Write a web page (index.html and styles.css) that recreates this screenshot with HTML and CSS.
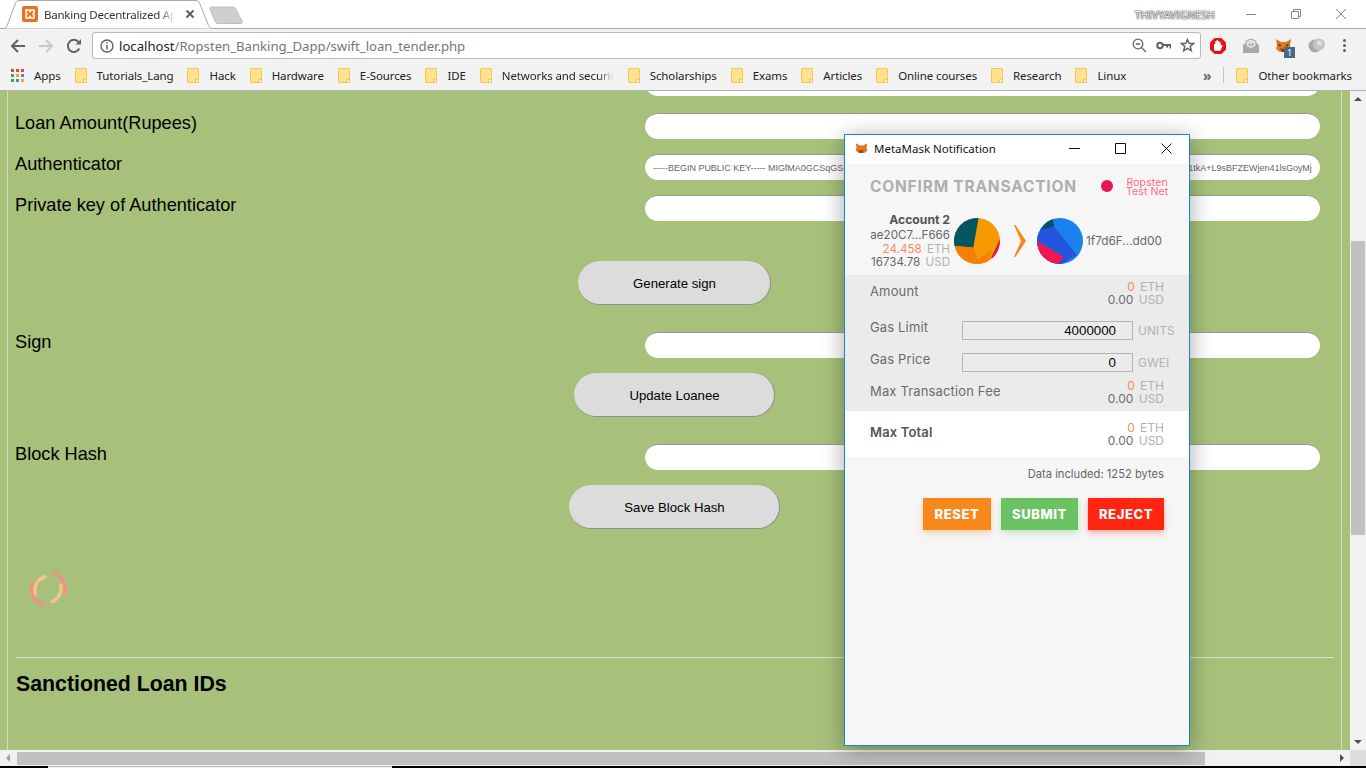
FILE: index.html
```html
<!DOCTYPE html>
<html lang="en">
<head>
    <meta charset="UTF-8">
    <meta name="viewport" content="width=device-width, initial-scale=1.0">
    <title>Banking Decentralized App</title>
    <link rel="stylesheet" href="styles.css">
</head>
<body>
    <div class="tabbar">
        <div class="tab">
            <svg class="tab-shape" width="214" height="29" viewBox="0 0 214 29"><path d="M0 28.500h4c1.500 0 2.500-1 3.200-3L15.500 3c.8-1.800 2-2.500 3.500-2.500h177c1.500 0 2.700.7 3.500 2.500l9 22.500c1 2 2 3 5 3" fill="#fff" stroke="#a9a9a9"/></svg>
            <svg class="favicon" width="16" height="16" viewBox="0 0 16 16"><rect width="16" height="16" rx="2" fill="#e8701f"/><path d="M4 4h3l1 1.500 1-1.500h3v3l-1 1 1 1v3H9l-1-1.500L7 12H4V9l1-1-1-1z" fill="none" stroke="#fff" stroke-width="1.600"/></svg>
            <span class="tab-title">Banking Decentralized Ap</span>
            <svg class="tab-close" width="10" height="10" viewBox="0 0 10 10"><path d="M1.500 1.500l7 7M8.500 1.500l-7 7" stroke="#5a5a5a" stroke-width="1.800"/></svg>
        </div>
        <svg class="newtab" width="36" height="19" viewBox="0 0 36 19"><path d="M2 1h22c1 0 2 .5 2.500 1.500L33 15c.5 1.500 0 2.500-1.500 2.500H9c-1 0-2-.5-2.500-1.500L1 3C.5 2 1 1 2 1z" fill="#cfcfcf" stroke="#bcbcbc"/></svg>
        <div class="winuser">THIVYAVIGNESH</div>
        <div class="winctl">
            <svg width="12" height="12" viewBox="0 0 12 12"><path d="M1 6.500h10" stroke="#8a8a8a"/></svg>
            <svg width="12" height="12" viewBox="0 0 12 12"><path d="M1.500 3.500h7v7h-7zM3.500 3.500v-2h7v7h-2" fill="none" stroke="#8a8a8a"/></svg>
            <svg width="12" height="12" viewBox="0 0 12 12"><path d="M1 1l10 10M11 1L1 11" stroke="#8a8a8a"/></svg>
        </div>
    </div>

    <div class="toolbar">
        <svg class="navbtn" width="16" height="16" viewBox="0 0 16 16"><path d="M15 8H2M8 2L2 8l6 6" fill="none" stroke="#5f6368" stroke-width="2"/></svg>
        <svg class="navbtn" width="16" height="16" viewBox="0 0 16 16"><path d="M1 8h13M8 2l6 6-6 6" fill="none" stroke="#c8c8c8" stroke-width="2"/></svg>
        <svg class="navbtn" width="16" height="16" viewBox="0 0 16 16"><path d="M13.300 10.500A6 6 0 1 1 12.500 4" fill="none" stroke="#5f6368" stroke-width="2"/><path d="M9.500 6.500H15V1z" fill="#5f6368"/></svg>
        <div class="omnibox">
            <svg width="14" height="14" viewBox="0 0 14 14"><circle cx="7" cy="7" r="6" fill="none" stroke="#5f6368" stroke-width="1.400"/><path d="M7 6v4.500" stroke="#5f6368" stroke-width="1.500"/><path d="M7 3.200v1.600" stroke="#5f6368" stroke-width="1.500"/></svg>
            <span class="url"><b>localhost</b>/Ropsten_Banking_Dapp/swift_loan_tender.php</span>
            <svg width="15" height="15" viewBox="0 0 15 15"><circle cx="6" cy="6" r="4.800" fill="none" stroke="#5f6368" stroke-width="1.300"/><path d="M3.800 6h4.400M9.500 9.500l4.500 4.500" stroke="#5f6368" stroke-width="1.300"/></svg>
            <svg width="15" height="15" viewBox="0 0 15 15"><circle cx="4" cy="7.500" r="2.800" fill="none" stroke="#5f6368" stroke-width="2"/><path d="M6.500 7h8v3.500M11 7v2.500" fill="none" stroke="#5f6368" stroke-width="2"/></svg>
            <svg width="15" height="15" viewBox="0 0 15 15"><path d="M7.500 1.500l1.800 4h4.300l-3.400 2.900 1.200 4.400-3.900-2.400-3.900 2.400 1.200-4.400L1.400 5.500h4.300z" fill="none" stroke="#5f6368" stroke-width="1.400"/></svg>
        </div>
        <div class="extensions">
            <svg width="18" height="18" viewBox="0 0 18 18"><path d="M5.500 1h7L17 5.500v7L12.500 17h-7L1 12.500v-7z" fill="#e3151b"/><path d="M5 13.500V7h1.300V4.300h1.400V3h1.300v1.300h1.500V5.500h1.200v3.300l1.100-1 .8.700-2.400 5.500z" fill="#fff"/></svg>
            <svg width="16" height="16" viewBox="0 0 16 16"><path d="M0 7l3-2h10l3 2v8H0z" fill="#a8a8a8"/><path d="M3 8V3l5-2 5 2v5l-5 3z" fill="#e2e2e2" stroke="#a8a8a8"/><path d="M5.500 6.500l1 1 1-2M8 6.500l1 1 1.500-2.500" fill="none" stroke="#8a8a8a"/></svg>
            <div class="fox-ext">
                <svg width="17" height="16" viewBox="0 0 17 16"><path d="M1 1l5 3h5l5-3-1 6 1 4-4 3h-7l-4-3 1-4z" fill="#e2761b"/><path d="M5 10l3 1 3-1-2 4H7z" fill="#763d16"/><path d="M3 6l3 1-1 2zM14 6l-3 1 1 2z" fill="#3b2a1b"/></svg>
                <span class="badge">1</span>
            </div>
            <svg width="18" height="16" viewBox="0 0 18 16"><circle cx="7" cy="8" r="6.500" fill="#a9a9a9"/><circle cx="11" cy="6.500" r="6" fill="#c4c4c4"/><circle cx="11.500" cy="5" r="2.500" fill="#e0e0e0"/></svg>
            <div class="kebab"><i></i><i></i><i></i></div>
        </div>
    </div>

    <div class="bookmarks">
        <div class="bm bm-apps">
            <span class="apps-grid">
                <i class="r"></i><i class="r"></i><i class="r"></i>
                <i class="g"></i><i class="y"></i><i class="b"></i>
                <i class="g"></i><i class="b"></i><i class="y"></i>
            </span>
            Apps
        </div>
        <div class="bm"><i class="folder"></i>Tutorials_Lang</div>
        <div class="bm"><i class="folder"></i>Hack</div>
        <div class="bm"><i class="folder"></i>Hardware</div>
        <div class="bm"><i class="folder"></i>E-Sources</div>
        <div class="bm"><i class="folder"></i>IDE</div>
        <div class="bm"><i class="folder"></i><span class="bm-cut">Networks and securit</span></div>
        <div class="bm"><i class="folder"></i>Scholarships</div>
        <div class="bm"><i class="folder"></i>Exams</div>
        <div class="bm"><i class="folder"></i>Articles</div>
        <div class="bm"><i class="folder"></i>Online courses</div>
        <div class="bm"><i class="folder"></i>Research</div>
        <div class="bm"><i class="folder"></i>Linux</div>
        <div class="bm-right">
            <span class="chev">»</span>
            <span class="bm-sep"></span>
            <div class="bm"><i class="folder"></i>Other bookmarks</div>
        </div>
    </div>

    <div class="viewport">
        <div class="page">
            <div class="row row-first"><label></label><input type="text"></div>
            <div class="row"><label>Loan Amount(Rupees)</label><input type="text"></div>
            <div class="row"><label>Authenticator</label><input type="text" class="small" value="-----BEGIN PUBLIC KEY----- MIGfMA0GCSqGSIb3DQEBAQUAA4GNADCBiQKBgQC7vbqajDw4o6gJy8X2kpT9xLmQe3RhZ0nVw5Fy1tkA+L9sBFZEWjen41lsGoyMj" size="20"></div>
            <div class="row"><label>Private key of Authenticator</label><input type="text"></div>
            <div class="btn-row btn-row-1"><button class="w192">Generate sign</button></div>
            <div class="row row-after-btn"><label>Sign</label><input type="text"></div>
            <div class="btn-row"><button class="w200">Update Loanee</button></div>
            <div class="row row-after-btn"><label>Block Hash</label><input type="text"></div>
            <div class="btn-row"><button class="w210">Save Block Hash</button></div>
            <svg class="spinner" width="44" height="42" viewBox="0 0 44 42">
                <path d="M17.300 37A17 17 0 0 1 6.300 15.300" fill="none" stroke="#fb8a8a" stroke-width="3" stroke-linecap="round"/>
                <path d="M27.300 5.300A17 17 0 0 1 39 25.300" fill="none" stroke="#fb8a8a" stroke-width="3" stroke-linecap="round"/>
                <path d="M9.500 26A14 14 0 0 1 19 8.700" fill="none" stroke="#f6c08f" stroke-width="3.500" stroke-linecap="round"/>
                <path d="M34.700 17A14 14 0 0 1 25.700 33.700" fill="none" stroke="#f6c08f" stroke-width="3.500" stroke-linecap="round"/>
            </svg>
            <hr>
            <h2>Sanctioned Loan IDs</h2>
        </div>
    </div>

    <div class="vscroll">
        <span class="arr-up"></span>
        <div class="vtrack"><div class="vthumb"></div></div>
        <span class="arr-down"></span>
    </div>
    <div class="hscroll">
        <span class="arr-left"></span>
        <div class="htrack"><div class="hthumb"></div></div>
        <span class="arr-right"></span>
        <span class="corner"></span>
    </div>
    <div class="taskbar"><div class="task-item"></div></div>

    <div class="popup">
        <div class="popup-title">
            <svg width="13" height="13" viewBox="0 0 17 16"><path d="M1 1l5 3h5l5-3-1 6 1 4-4 3h-7l-4-3 1-4z" fill="#e2761b"/><path d="M5 10l3 1 3-1-2 4H7z" fill="#763d16"/></svg>
            <span class="popup-name">MetaMask Notification</span>
            <svg class="p-min" width="11" height="11" viewBox="0 0 11 11"><path d="M0 5.500h11" stroke="#111"/></svg>
            <svg class="p-max" width="11" height="11" viewBox="0 0 11 11"><path d="M.5.500h10v10H.5z" fill="none" stroke="#111"/></svg>
            <svg class="p-close" width="11" height="11" viewBox="0 0 11 11"><path d="M.5.500l10 10M10.500.500l-10 10" stroke="#111"/></svg>
        </div>
        <div class="popup-head">
            <h3>CONFIRM TRANSACTION</h3>
            <span class="net-dot"></span>
            <span class="net-name">Ropsten<br>Test Net</span>
        </div>
        <div class="parties">
            <div class="from">
                <div class="acc-name">Account 2</div>
                <div>ae20C7...F666</div>
                <div><span class="orange">24.458</span> <span class="unit">ETH</span></div>
                <div>16734.78 <span class="unit">USD</span></div>
            </div>
            <svg width="46" height="46" viewBox="0 0 46 46">
                <clipPath id="pieclip"><circle cx="23" cy="23" r="23"/></clipPath>
                <g clip-path="url(#pieclip)">
                    <rect width="46" height="46" fill="#f59a00"/>
                    <path d="M24.500 0L19.300 29.500 0 28V0z" fill="#02565f"/>
                    <path d="M0 28l19.300 1.500L24 41.500 38 32 34 46H0z" fill="#f67f00"/>
                    <path d="M46 21L37 40l9 3z" fill="#d81b50"/>
                </g>
            </svg>
            <svg class="chevron" width="12" height="32" viewBox="0 0 12 32"><path d="M0 0h1.500L12 16 1.500 32H0l7-16z" fill="#f7861c"/></svg>
            <svg width="46" height="46" viewBox="0 0 46 46">
                <clipPath id="pieclip2"><circle cx="23" cy="23" r="23"/></clipPath>
                <g clip-path="url(#pieclip2)">
                    <rect width="46" height="46" fill="#1a82ee"/>
                    <path d="M0 18L4 11 17 8.500 40 37 25 46H0z" fill="#2356dc"/>
                    <path d="M0 23L27 39 21 46H0z" fill="#f2184f"/>
                    <path d="M3 12L13 0h3l1 8.500z" fill="#05506a"/>
                </g>
            </svg>
            <div class="to">1f7d6F...dd00</div>
        </div>
        <div class="details">
            <div class="d-row d-amount">
                <span>Amount</span>
                <div class="vals"><div><span class="orange">0</span> <span class="unit">ETH</span></div><div>0.00 <span class="unit">USD</span></div></div>
            </div>
            <div class="d-row d-gas">
                <span>Gas Limit</span>
                <div class="gas-right"><input type="text" value="4000000"><span class="unit">UNITS</span></div>
            </div>
            <div class="d-row d-gas">
                <span>Gas Price</span>
                <div class="gas-right"><input type="text" value="0"><span class="unit">GWEI</span></div>
            </div>
            <div class="d-row d-fee">
                <span>Max Transaction Fee</span>
                <div class="vals"><div><span class="orange">0</span> <span class="unit">ETH</span></div><div>0.00 <span class="unit">USD</span></div></div>
            </div>
        </div>
        <div class="d-row total">
            <span>Max Total</span>
            <div class="vals"><div><span class="orange">0</span> <span class="unit">ETH</span></div><div>0.00 <span class="unit">USD</span></div></div>
        </div>
        <div class="data-inc">Data included: 1252 bytes</div>
        <div class="actions">
            <button class="reset">RESET</button>
            <button class="submit">SUBMIT</button>
            <button class="reject">REJECT</button>
        </div>
    </div>
</body>
</html>
```

FILE: styles.css
```css
html, body {
    margin: 0;
    height: 768px;
    overflow: hidden;
}
body {
    position: relative;
    width: 1366px;
    display: flex;
    flex-direction: column;
    background-color: #fff;
    font-family: 'Noto Sans', sans-serif;
    color: #333;
}

/* browser top */
.tabbar {
    height: 28px;
    flex: none;
    display: flex;
    align-items: flex-start;
    background-color: #fff;
    border-bottom: 1px solid #a9a9a9;
    box-sizing: content-box;
}
.tab {
    position: relative;
    width: 203px;
    height: 28px;
    flex: none;
    display: flex;
    align-items: center;
    padding-left: 22px;
    box-sizing: border-box;
    z-index: 1;
}
.tab-shape {
    position: absolute;
    left: 0;
    top: 0;
}
.favicon, .tab-title, .tab-close {
    position: relative;
    flex: none;
}
.tab-title {
    width: 131px;
    margin-left: 6px;
    font-size: 11.500px;
    letter-spacing: -0.25px;
    color: #333;
    white-space: nowrap;
    -webkit-mask-image: linear-gradient(to right, #000 88%, transparent);
    mask-image: linear-gradient(to right, #000 88%, transparent);
}
.tab-close {
    margin-left: 10px;
}
.newtab {
    margin: 6px 0 0 6px;
    flex: none;
}
.winuser {
    margin: 8px 0 0 890px;
    width: 82px;
    font-size: 10px;
    letter-spacing: 0.3px;
    color: #eee;
    text-shadow: 0 0 2px #222, 0 0 1px #222;
    white-space: nowrap;
}
.winctl {
    display: flex;
    gap: 33px;
    margin: 8px 0 0 28px;
}

.toolbar {
    height: 33px;
    flex: none;
    display: flex;
    align-items: center;
    background-color: #f2f2f2;
    padding-left: 10px;
    box-sizing: border-box;
}
.navbtn {
    margin-right: 12px;
}
.omnibox {
    width: 1109px;
    height: 27px;
    margin-left: -2px;
    display: flex;
    align-items: center;
    gap: 9px;
    padding: 0 5px 0 7px;
    box-sizing: border-box;
    background-color: #fff;
    border: 1px solid #b8b8b8;
    border-radius: 3px;
}
.url {
    flex: 1;
    margin-left: -4px;
    padding-top: 1px;
    font-size: 13.150px;
    color: #70787d;
}
.url b {
    font-weight: normal;
    color: #222;
}
.extensions {
    display: flex;
    align-items: center;
    gap: 16px;
    margin-left: 8px;
}
.fox-ext {
    position: relative;
    display: flex;
}
.badge {
    position: absolute;
    left: 9px;
    top: 9px;
    width: 11px;
    height: 11px;
    background-color: #46698a;
    color: #fff;
    font-size: 9px;
    line-height: 11px;
    text-align: center;
}
.kebab {
    display: flex;
    flex-direction: column;
    gap: 2px;
    margin-left: 1px;
}
.kebab i {
    width: 3px;
    height: 3px;
    background-color: #5f6368;
    border-radius: 50%;
}

.bookmarks {
    height: 29px;
    flex: none;
    display: flex;
    align-items: center;
    gap: 14px;
    padding: 0 0 2px 11px;
    box-sizing: border-box;
    background-color: #f2f2f2;
    border-bottom: 1px solid #b0b0b0;
    font-size: 11.500px;
    letter-spacing: -0.11px;
    color: #222;
}
.bm {
    display: flex;
    align-items: center;
    white-space: nowrap;
}
.apps-grid {
    display: grid;
    grid-template-columns: repeat(3, 3px);
    gap: 2px;
    margin-right: 10px;
}
.apps-grid i {
    width: 3px;
    height: 3px;
}
.apps-grid .r { background-color: #e8453c; }
.apps-grid .g { background-color: #34a853; }
.apps-grid .y { background-color: #f9ab00; }
.apps-grid .b { background-color: #4285f4; }
.folder {
    position: relative;
    width: 10px;
    height: 13px;
    margin-right: 10px;
    background-color: #fde28f;
    border: 1px solid #f2c94c;
    border-radius: 1px;
}
.folder::after {
    content: "";
    position: absolute;
    right: -1px;
    bottom: -1px;
    width: 2px;
    height: 2px;
    background-color: #f2f2f2;
    border: 1px solid #f2c94c;
}
.bm-cut {
    width: 112px;
    overflow: hidden;
    -webkit-mask-image: linear-gradient(to right, #000 85%, transparent);
    mask-image: linear-gradient(to right, #000 85%, transparent);
}
.bm-right {
    margin-left: auto;
    display: flex;
    align-items: center;
    gap: 12px;
    padding-right: 14px;
}
.chev {
    font-size: 14px;
    font-weight: bold;
    color: #666;
}
.bm-sep {
    width: 1px;
    height: 16px;
    background-color: #c4c4c4;
}

/* page */
.viewport {
    height: 659px;
    flex: none;
    margin-right: 16px;
    background-color: #a7c17b;
    overflow: hidden;
}
.page {
    height: 700px;
    margin: 0 8px 0 7px;
    padding: 0 7px 0 8px;
    border-left: 1px solid #d3dcc4;
    border-right: 1px solid #d3dcc4;
    font-family: 'Liberation Sans', sans-serif;
    color: #000;
}
.row {
    height: 41px;
    display: flex;
    align-items: flex-start;
    justify-content: space-between;
}
.row-first {
    margin-top: -21px;
    height: 43px;
}
.row label {
    margin-left: -1px;
    font-size: 18.200px;
    line-height: 21px;
}
.row input {
    width: 675px;
    height: 26px;
    margin-right: 14px;
    padding: 0 8px;
    box-sizing: border-box;
    background-color: #fff;
    border: none;
    border-top: 1px solid #999;
    border-radius: 13px;
    outline: none;
}
.row input.small {
    font-family: 'Liberation Sans', sans-serif;
    font-size: 9px;
    letter-spacing: -0.01px;
    color: #666;
}
.btn-row {
    display: flex;
    justify-content: center;
    height: 71px;
    padding-right: 2px;
    box-sizing: border-box;
}
.btn-row-1 {
    margin-top: 25px;
}
button {
    font-family: 'Liberation Sans', sans-serif;
}
.btn-row button {
    height: 44px;
    padding: 1px 0 0 2px;
    background-color: #dcdcdc;
    border: none;
    border-right: 1px solid #8c8c8c;
    border-bottom: 1px solid #8c8c8c;
    border-radius: 22px;
    font-size: 13.200px;
    color: #000;
}
.w192 { width: 193px; }
.w200 { width: 201px; }
.w210 { width: 211px; }
.spinner {
    display: block;
    margin: 12px 0 0 10px;
}
.page hr {
    margin: 47px 0 0;
    border: none;
    border-top: 1px solid #dfe6d3;
}
.page h2 {
    margin: 14px 0 0;
    font-size: 21.300px;
    line-height: 24px;
}

/* scrollbars */
.vscroll {
    position: absolute;
    right: 0;
    top: 91px;
    width: 16px;
    height: 659px;
    display: flex;
    flex-direction: column;
    align-items: center;
    background-color: #f1f1f1;
}
.vtrack {
    flex: 1;
    width: 100%;
}
.vthumb {
    width: 14px;
    height: 294px;
    margin: 134px auto 0;
    background-color: #c1c1c1;
}
.arr-up, .arr-down {
    width: 0;
    height: 0;
    margin: 6px 0;
    border-left: 4px solid transparent;
    border-right: 4px solid transparent;
}
.arr-up { border-bottom: 4px solid #505050; }
.arr-down { border-top: 4px solid #505050; }
.hscroll {
    position: absolute;
    left: 0;
    top: 750px;
    width: 1366px;
    height: 16px;
    display: flex;
    align-items: center;
    background-color: #f1f1f1;
}
.htrack {
    flex: 1;
}
.hthumb {
    width: 1188px;
    height: 13px;
    margin-left: 1px;
    background-color: #c1c1c1;
}
.arr-left, .arr-right {
    width: 0;
    height: 0;
    margin: 0 6px;
    border-top: 4px solid transparent;
    border-bottom: 4px solid transparent;
}
.arr-left { border-right: 4px solid #a0a0a0; }
.arr-right { border-left: 4px solid #505050; }
.corner {
    width: 16px;
    height: 16px;
    background-color: #dcdcdc;
}
.taskbar {
    position: absolute;
    left: 0;
    bottom: 0;
    width: 100%;
    height: 2px;
    background-color: #000;
}
.task-item {
    width: 344px;
    height: 1px;
    margin-left: 48px;
    background-color: #eee;
    border-top: 1px solid #bbb;
}

/* metamask popup */
.popup {
    position: absolute;
    left: 844px;
    top: 134px;
    width: 346px;
    height: 612px;
    box-sizing: border-box;
    background-color: #f6f6f6;
    border: 1px solid #1a84d8;
    box-shadow: 0 4px 22px rgba(0, 0, 0, 0.35);
    font-family: 'Inter', sans-serif;
    font-size: 13px;
    letter-spacing: 0.15px;
    color: #6b6b6b;
}
.popup-title {
    height: 29px;
    display: flex;
    align-items: center;
    padding: 0 0 3px 10px;
    box-sizing: border-box;
    background-color: #fff;
}
.popup-name {
    width: 194px;
    margin-left: 6px;
    font-family: 'Noto Sans', sans-serif;
    font-size: 11.500px;
    letter-spacing: 0;
    color: #111;
}
.p-min { margin-left: 1px; }
.p-max { margin-left: 35px; }
.p-close { margin-left: 35px; }
.popup-head {
    height: 44px;
    display: flex;
    align-items: center;
    padding-left: 25px;
}
.popup-head h3 {
    width: 231px;
    margin: 0;
    font-size: 15.500px;
    font-weight: 700;
    letter-spacing: 0.8px;
    color: #aeaeae;
    white-space: nowrap;
}
.net-dot {
    width: 12px;
    height: 12px;
    border-radius: 50%;
    background-color: #e91550;
}
.net-name {
    margin: 4px 0 0 13px;
    font-size: 10.500px;
    letter-spacing: 0.1px;
    line-height: 8.700px;
    text-align: center;
    color: #ff6b7e;
}
.parties {
    height: 66px;
    margin-bottom: 1px;
    display: flex;
    align-items: center;
}
.from {
    width: 105px;
    margin-right: 4px;
    text-align: right;
    font-size: 11.600px;
    letter-spacing: 0;
    line-height: 13.500px;
    color: #666;
}
.acc-name {
    margin-bottom: 3px;
    font-size: 12.200px;
    font-weight: 700;
    color: #555;
}
.chevron {
    margin: 0 11px 0 14px;
}
.to {
    margin-left: 3px;
    font-size: 11.800px;
    letter-spacing: 0;
    color: #666;
}
.orange { color: #fa8c5a; }
.unit {
    margin-left: 2px;
    color: #b2b2b2;
}
.details {
    height: 136px;
    background-color: #ebebeb;
}
.d-row {
    display: flex;
    justify-content: space-between;
    align-items: flex-start;
    padding: 0 25px;
}
.d-row > span {
    line-height: 16px;
}
.d-row .vals {
    text-align: right;
    font-size: 12px;
    letter-spacing: 0;
    line-height: 13px;
}
.d-amount {
    height: 44px;
    padding-top: 8px;
    box-sizing: border-box;
}
.d-amount .vals {
    margin-top: -3px;
}
.d-gas {
    height: 32px;
    padding-right: 14px;
}
.gas-right {
    display: flex;
    align-items: center;
    gap: 5px;
    margin-top: 2px;
    font-size: 12px;
    letter-spacing: 0;
}
.gas-right .unit {
    width: 37px;
    margin-left: 0;
}
.gas-right input {
    width: 171px;
    height: 19px;
    padding: 0 16px 0 0;
    box-sizing: border-box;
    background-color: #ebebeb;
    border: 1px solid #b4b4b4;
    text-align: right;
    font-family: 'Liberation Sans', sans-serif;
    font-size: 13.300px;
    color: #000;
}
.d-fee {
    height: 28px;
    box-sizing: border-box;
}
.d-fee .vals {
    margin-top: -4px;
}
.total {
    height: 46px;
    padding-top: 13px;
    box-sizing: border-box;
    background-color: #fff;
}
.total > span {
    font-weight: 600;
    color: #555;
}
.total .vals {
    margin-top: -3px;
}
.data-inc {
    height: 41px;
    padding: 10px 25px 0 0;
    box-sizing: border-box;
    text-align: right;
    font-size: 11.200px;
    letter-spacing: 0;
    color: #666;
}
.actions {
    display: flex;
    justify-content: flex-end;
    gap: 10px;
    padding-right: 25px;
}
.actions button {
    height: 32px;
    padding: 0;
    border: none;
    font-family: 'Inter', sans-serif;
    font-size: 13px;
    font-weight: 800;
    letter-spacing: 0.6px;
    color: #fff;
}
.reset {
    width: 68px;
    background-color: #f9881c;
    box-shadow: 0 3px 6px rgba(249, 136, 28, 0.35);
}
.submit {
    width: 77px;
    background-color: #6bc263;
    box-shadow: 0 3px 6px rgba(107, 194, 99, 0.35);
}
.reject {
    width: 76px;
    background-color: #ff2511;
    box-shadow: 0 3px 6px rgba(255, 37, 17, 0.35);
}
```
